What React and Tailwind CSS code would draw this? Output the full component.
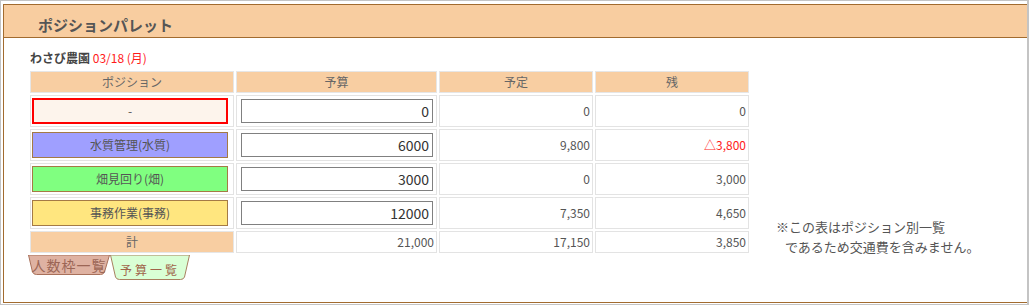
import React from 'react';

const font = { fontFamily: '"Noto Sans CJK JP", "Noto Sans", sans-serif' };

const rows = [
  { name: '-', budget: '0', plan: '0', rest: '0', box: 'bg-[#fdf4ec] border-2 border-[#ff0000]' },
  { name: '水質管理(水質)', budget: '6000', plan: '9,800', rest: '△3,800', neg: true, box: 'bg-[#9f9fff] border border-[#a47a45]' },
  { name: '畑見回り(畑)', budget: '3000', plan: '0', rest: '3,000', box: 'bg-[#80ff80] border border-[#a47a45]' },
  { name: '事務作業(事務)', budget: '12000', plan: '7,350', rest: '4,650', box: 'bg-[#ffe67f] border border-[#a47a45]' },
];

const HeadCell = ({ children }) => (
  <div className="flex items-center justify-center bg-[#f8cea2] border border-[#e6e6e6] text-[12px] text-[#666]">
    {children}
  </div>
);

const NumCell = ({ children, red }) => (
  <div className={`flex items-center justify-end pr-[2px] border border-[#e3e3e3] text-[12px] ${red ? 'text-[#ff1a1a]' : 'text-[#555]'}`}>
    {children}
  </div>
);

const Tab = ({ w, h, d, fill, stroke, label, textClass }) => (
  <div className="relative flex items-center justify-center" style={{ width: w, height: h }}>
    <svg className="absolute inset-0" width={w} height={h} viewBox={`0 0 ${w} ${h}`}>
      <path d={d} fill={fill} stroke={stroke} strokeWidth="1" />
    </svg>
    <span className={`relative ${textClass}`}>{label}</span>
  </div>
);

export default function App() {
  return (
    <div className="w-[1029px] h-[305px] bg-white border border-r-2 border-[#c4c4c4] pt-[3px] pl-[2px] overflow-hidden" style={font}>
      <div className="w-[1040px] h-[299px] border-l border-t border-b border-[#a26b2f] flex flex-col">
        {/* title bar */}
        <div className="h-[33px] bg-[#f8cda0] border-b border-[#a26b2f] pl-[34px] pt-[7px]">
          <span className="text-[15px] leading-[20px] font-bold text-[#555]">ポジションパレット</span>
        </div>

        <div className="pl-[26px] pt-[12px]">
          <div className="text-[12px] leading-[16px] font-bold text-[#444]">
            わさび農園 <span className="font-normal text-[#ff1a1a]">03/18 (月)</span>
          </div>

          <div className="flex items-end mt-[5px]">
            <div className="grid grid-cols-[204px_201px_154px_154px] grid-rows-[22px_32px_32px_32px_32px_22px] gap-[2px]">
              <HeadCell>ポジション</HeadCell>
              <HeadCell>予算</HeadCell>
              <HeadCell>予定</HeadCell>
              <HeadCell>残</HeadCell>

              {rows.map((r) => (
                <React.Fragment key={r.name}>
                  <div className="flex items-center pl-[1px] border border-[#e3e3e3]">
                    <div className={`w-[196px] h-[26px] flex items-center justify-center text-[12px] text-[#555] ${r.box}`}>
                      {r.name}
                    </div>
                  </div>
                  <div className="flex items-center justify-center pl-[1px] border border-[#e3e3e3]">
                    <input
                      readOnly
                      value={r.budget}
                      className="w-[192px] h-[24px] border border-[#808080] bg-white text-right pr-[3px] text-[14px] font-normal text-[#333] outline-none"
                      style={font}
                    />
                  </div>
                  <NumCell>{r.plan}</NumCell>
                  <NumCell red={r.neg}>{r.rest}</NumCell>
                </React.Fragment>
              ))}

              <HeadCell>計</HeadCell>
              <NumCell>21,000</NumCell>
              <NumCell>17,150</NumCell>
              <NumCell>3,850</NumCell>
            </div>

            <div className="ml-[27px] mb-[-4px] text-[13px] leading-[20px] text-[#555]">
              <div>※この表はポジション別一覧</div>
              <div className="pl-[9px]">であるため交通費を含みません。</div>
            </div>
          </div>

          <div className="flex mt-[2px] ml-[-2px]">
            <Tab
              w={82}
              h={20}
              d="M0.5,0 L81.5,0 L76.5,17 Q75.5,19.5 72.5,19.5 L8.5,19.5 Q5.5,19.5 4.5,17 Z"
              fill="#dfb2a2"
              stroke="#a8705a"
              label="人数枠一覧"
              textClass="text-[14px] leading-[16px] tracking-[1px] text-[#9c6656]"
            />
            <Tab
              w={80}
              h={25}
              d="M0.5,0 L79.5,0 L74.5,22 Q73.5,24.5 70.5,24.5 L9.5,24.5 Q6.5,24.5 5.5,22 Z"
              fill="#d9ffd5"
              stroke="#a8805f"
              label="予算一覧"
              textClass="text-[12px] leading-[16px] tracking-[3px] text-[#a0644a] pt-[4px]"
            />
          </div>
        </div>
      </div>
    </div>
  );
}
